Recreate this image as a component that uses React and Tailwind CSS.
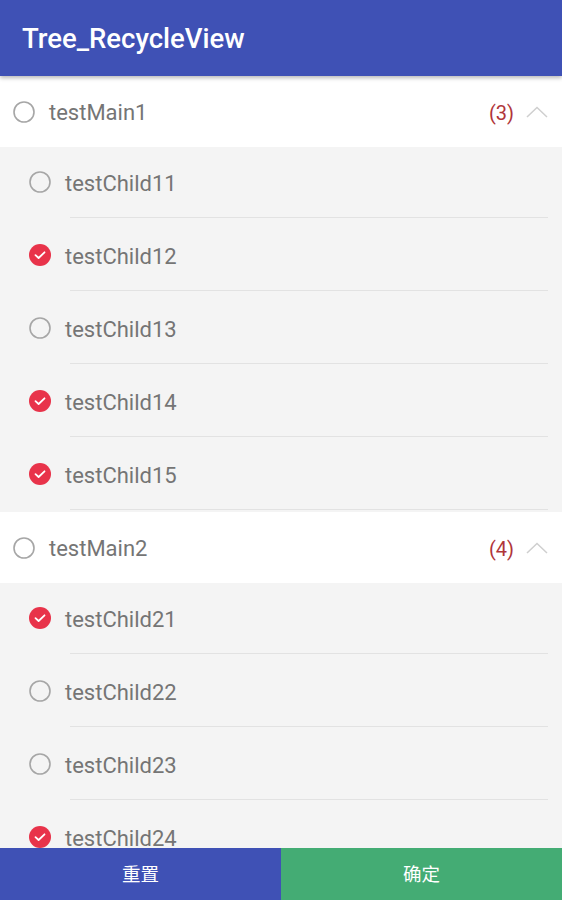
import React from "react";

const groups = [
  {
    name: "testMain1",
    count: 3,
    children: [
      ["testChild11", false],
      ["testChild12", true],
      ["testChild13", false],
      ["testChild14", true],
      ["testChild15", true],
    ],
  },
  {
    name: "testMain2",
    count: 4,
    children: [
      ["testChild21", true],
      ["testChild22", false],
      ["testChild23", false],
      ["testChild24", true],
    ],
  },
];

function Radio({ checked }) {
  if (checked) {
    return (
      <svg width="22" height="22" viewBox="0 0 22 22" className="shrink-0">
        <circle cx="11" cy="11" r="11" fill="#E8334A" />
        <path d="M6.5 11.2 L9.6 14 L15.5 8.3" fill="none" stroke="#fff" strokeWidth="1.8" strokeLinecap="round" strokeLinejoin="round" />
      </svg>
    );
  }
  return (
    <svg width="22" height="22" viewBox="0 0 22 22" className="shrink-0">
      <circle cx="11" cy="11" r="10" fill="none" stroke="#A6A6A6" strokeWidth="1.6" />
    </svg>
  );
}

export default function App() {
  return (
    <div className="w-[562px] h-[900px] relative overflow-hidden bg-[#F4F4F4] flex flex-col" style={{ fontFamily: "Roboto, 'Noto Sans CJK SC', sans-serif" }}>
      <div className="h-[76px] shrink-0 bg-[#3F51B5] flex items-center pl-[22px] relative z-10 shadow-[0_2px_4px_rgba(0,0,0,0.28)]">
        <span className="text-white text-[27.5px] font-medium leading-none mt-[2px]">Tree_RecycleView</span>
      </div>
      <div className="flex-1 overflow-hidden">
        {groups.map((g) => (
          <div key={g.name}>
            <div className="h-[71px] bg-white flex items-center pl-[13px] pr-[14px]">
              <Radio checked={false} />
              <span className="ml-[14px] mt-[3px] text-[22px] text-[#757575] leading-none">{g.name}</span>
              <span className="ml-auto mt-[3px] text-[20px] text-[#B0353A] leading-none">({g.count})</span>
              <svg width="22" height="12" viewBox="0 0 22 12" className="ml-[12px]">
                <path d="M1 11 L11 1.5 L21 11" fill="none" stroke="#CFCFCF" strokeWidth="1.5" />
              </svg>
            </div>
            {g.children.map(([name, checked]) => (
              <div key={name} className="h-[73px] flex flex-col">
                <div className="h-[70px] flex items-center pl-[29px]">
                  <Radio checked={checked} />
                  <span className="ml-[14px] mt-[3px] text-[22px] text-[#757575] leading-none">{name}</span>
                </div>
                <div className="h-px bg-[#E2E2E2] ml-[70px] mr-[14px]" />
              </div>
            ))}
          </div>
        ))}
      </div>
      <div className="absolute bottom-0 left-0 right-0 h-[52px] flex">
        <div className="w-[281px] bg-[#3F51B5] flex items-center justify-center text-white text-[18.5px] pt-[3px]">重置</div>
        <div className="flex-1 bg-[#44AC74] flex items-center justify-center text-white text-[18.5px] pt-[3px]">确定</div>
      </div>
    </div>
  );
}
